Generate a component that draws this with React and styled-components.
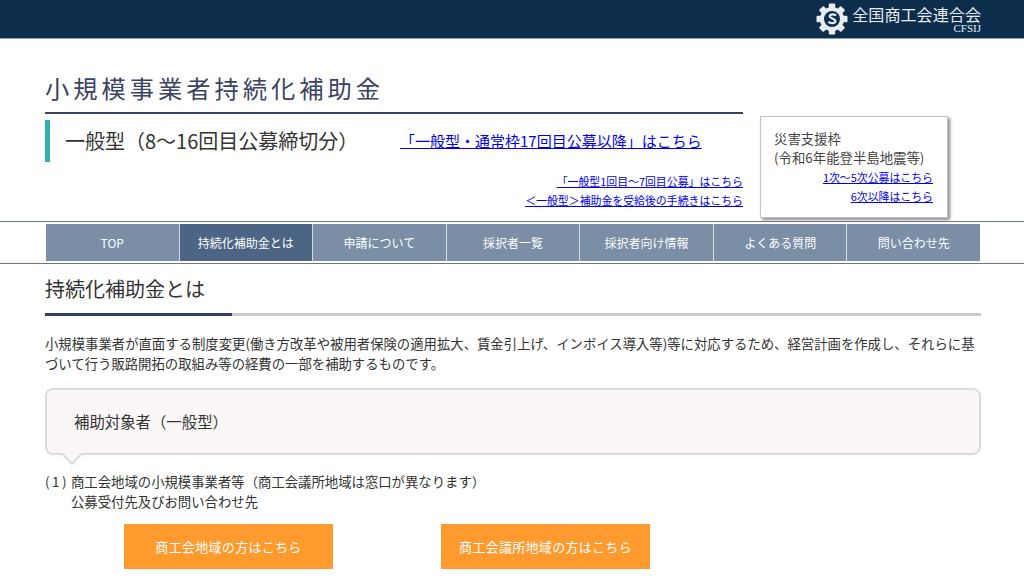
import React from "react";
import styled, { createGlobalStyle } from "styled-components";

const Global = createGlobalStyle`
  html, body { margin: 0; padding: 0; background: #fff; overflow: hidden; height: 584px; }
  body { font-family: "Noto Sans CJK JP", "Noto Sans", sans-serif; color: #333; }
  a { color: #0000ee; }
`;
const TopBar = styled.header`
  height: 38px; background: #0c2d4c; border-bottom: 1px solid #8fa3b5;
  display: flex; justify-content: flex-end; padding-right: 43px;
`;
const Logo = styled.div`display: flex; align-items: flex-start; gap: 4px; color: #e8edf2; padding-top: 3px;`;
const LogoText = styled.div`display: flex; flex-direction: column; align-items: flex-end; line-height: 1; margin-top: 1px;`;
const LogoName = styled.span`font-size: 16.1px; line-height: 20px; white-space: nowrap;`;
const LogoSub = styled.span`font-family: "Liberation Serif", serif; font-size: 11px; line-height: 9px;`;
const Head = styled.div`display: flex; padding: 0 45px; height: 182px; justify-content: space-between;`;
const HeadMain = styled.div`width: 698px;`;
const Title = styled.h1`
  margin: 0; box-sizing: content-box; border-bottom: 2px solid #3a4362;
  font-size: 24.3px; font-weight: 400; letter-spacing: 3.95px; color: #3a4362; line-height: 34px;
  display: flex; align-items: flex-end; padding-bottom: 7px; height: 66px; white-space: nowrap;
`;
const SubRow = styled.div`display: flex; align-items: center; height: 42px; margin-top: 6px; border-left: 5px solid #2fb0b5; padding-left: 15px;`;
const SubTitle = styled.div`font-size: 20px; color: #333; line-height: 42px; width: 335px; white-space: nowrap;`;
const BigLink = styled.a`font-size: 15px; line-height: 22px; white-space: nowrap;`;
const SmallLinks = styled.div`display: flex; flex-direction: column; align-items: flex-end; margin-top: 10px;`;
const SmallLink = styled.a`font-size: 10.9px; line-height: 18.5px; white-space: nowrap;`;
const Disaster = styled.aside`
  width: 188px; height: 102px; box-sizing: border-box; margin-top: 77px; margin-right: 31px;
  border: 1px solid #c4c4c4; box-shadow: 2px 2px 3px #888; background: #fff;
  padding: 12px 14px 0 13px; font-size: 13.4px; line-height: 19px; color: #444; white-space: nowrap;
`;
const DLinks = styled.div`display: flex; flex-direction: column; align-items: flex-end; margin-top: 1px;`;
const NavBand = styled.div`
  border-top: 1px solid #6b7591; border-bottom: 1px solid #6b7591; padding: 2px 0 0 45px; height: 39px;
`;
const Nav = styled.nav`
  display: grid; grid-template-columns: repeat(7, 1fr); height: 37px; width: 936px; box-sizing: border-box;
  border-right: 1px solid #fff; background: #fff;
`;
const NavItem = styled.div`
  background: ${p => (p.$active ? "#4c6584" : "#7a8ea6")}; color: #fff; font-size: 12px; font-weight: 400;
  display: flex; align-items: center; justify-content: center;
  border-left: 1px solid ${p => (p.$first ? "#fff" : "#d5dce4")};
`;
const Main = styled.main`padding: 0 43px 0 45px;`;
const H2 = styled.h2`
  margin: 0; position: relative; height: 52px; box-sizing: border-box; border-bottom: 3px solid #ccc;
  font-size: 20px; font-weight: 400; line-height: 50px; color: #333; width: 936px;
  &::after { content: ""; position: absolute; left: 0; bottom: -3px; width: 187px; height: 3px; background: #353d62; }
`;
const Lead = styled.p`margin: 17px 0 0; font-size: 13.37px; line-height: 20px; color: #333; width: 936px;`;
const Bubble = styled.div`
  position: relative; width: 936px; height: 67px; box-sizing: border-box; margin-top: 15px;
  background: #fbf7f7; border: 2px solid #dcdcdc; border-radius: 8px;
  font-size: 15.4px; line-height: 63px; padding-left: 27px; color: #333;
  &::after { content: ""; position: absolute; left: 18px; bottom: -9px; width: 12px; height: 12px;
    background: #fbf7f7; border-right: 2px solid #dcdcdc; border-bottom: 2px solid #dcdcdc; transform: rotate(45deg); }
`;
const Item = styled.div`display: flex; margin-top: 16px; font-size: 13.37px; line-height: 20px;`;
const ItemNo = styled.span`width: 26px; flex: none; letter-spacing: 2.5px;`;
const Buttons = styled.div`display: flex; gap: 108px; margin: 13px 0 0 79px;`;
const Btn = styled.a`
  width: 209px; height: 45px; background: #ff9a2e; color: #fff; text-decoration: none;
  display: flex; align-items: center; justify-content: center; font-size: 13px; font-weight: 400; letter-spacing: .3px;
`;

const Gear = () => (
  <svg width="32" height="32" viewBox="0 0 32 32">
    <g fill="#e8edf2">
      {[0,45,90,135,180,225,270,315].map(a => <rect key={a} x="12.8" y="0.5" width="6.4" height="7" rx="1" transform={`rotate(${a} 16 16)`} />)}
    </g>
    <circle cx="16" cy="16" r="10" fill="#0c2d4c" stroke="#e8edf2" strokeWidth="4" />
    <path d="M20 12.5c-1-1.3-5.5-1.8-6.3.4-.9 2.6 6.4 2.6 5.7 5.6-.6 2.3-5.6 1.9-7 .2" fill="none" stroke="#e8edf2" strokeWidth="2.2" />
  </svg>
);

const navs = ["TOP", "持続化補助金とは", "申請について", "採択者一覧", "採択者向け情報", "よくある質問", "問い合わせ先"];

export default function App() {
  return (
    <>
      <Global />
      <TopBar>
        <Logo>
          <Gear />
          <LogoText>
            <LogoName>全国商工会連合会</LogoName>
            <LogoSub>CFSIJ</LogoSub>
          </LogoText>
        </Logo>
      </TopBar>
      <Head>
        <HeadMain>
          <Title>小規模事業者持続化補助金</Title>
          <SubRow>
            <SubTitle>一般型（8〜16回目公募締切分）</SubTitle>
            <BigLink href="#">「一般型・通常枠17回目公募以降」はこちら</BigLink>
          </SubRow>
          <SmallLinks>
            <SmallLink href="#">「一般型1回目〜7回目公募」はこちら</SmallLink>
            <SmallLink href="#">＜一般型＞補助金を受給後の手続きはこちら</SmallLink>
          </SmallLinks>
        </HeadMain>
        <Disaster>
          災害支援枠<br />(令和6年能登半島地震等)
          <DLinks>
            <SmallLink href="#">1次〜5次公募はこちら</SmallLink>
            <SmallLink href="#">6次以降はこちら</SmallLink>
          </DLinks>
        </Disaster>
      </Head>
      <NavBand>
        <Nav>
          {navs.map((n, i) => <NavItem key={n} $active={i === 1} $first={i === 0}>{n}</NavItem>)}
        </Nav>
      </NavBand>
      <Main>
        <H2>持続化補助金とは</H2>
        <Lead>小規模事業者が直面する制度変更(働き方改革や被用者保険の適用拡大、賃金引上げ、インボイス導入等)等に対応するため、経営計画を作成し、それらに基づいて行う販路開拓の取組み等の経費の一部を補助するものです。</Lead>
        <Bubble>補助対象者（一般型）</Bubble>
        <Item>
          <ItemNo>(1)</ItemNo>
          <div>商工会地域の小規模事業者等（商工会議所地域は窓口が異なります）<br />公募受付先及びお問い合わせ先</div>
        </Item>
        <Buttons>
          <Btn href="#">商工会地域の方はこちら</Btn>
          <Btn href="#">商工会議所地域の方はこちら</Btn>
        </Buttons>
      </Main>
    </>
  );
}
